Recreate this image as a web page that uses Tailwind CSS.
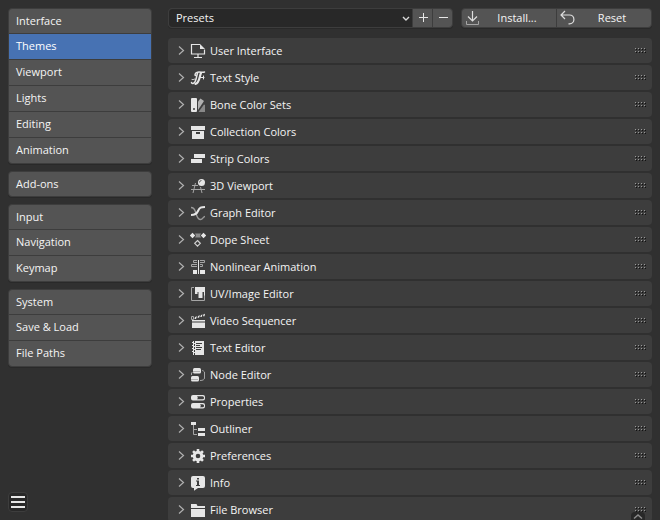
<!DOCTYPE html>
<html lang="en">
<head>
    <meta charset="UTF-8">
    <meta name="viewport" content="width=device-width, initial-scale=1.0">
    <title>Preferences</title>
    <script src="https://cdn.jsdelivr.net/npm/@tailwindcss/browser@4"></script>
</head>
<body class="h-screen overflow-hidden bg-[#303030] font-['Open_Sans','DejaVu_Sans',sans-serif] text-[11px] leading-4 text-[#f4f4f4] text-shadow-[0_1px_2px_rgb(0_0_0/0.6)]">

<div class="flex h-full gap-4 px-2 pt-2">

    <!-- Sidebar -->
    <aside class="flex w-36 shrink-0 flex-col">
        <nav id="sections" class="flex flex-col gap-[7px]"></nav>
        <button aria-label="Menu" class="mt-auto mb-2 flex size-5 items-center justify-center rounded border border-[#3d3d3d] bg-[#282828]">
            <svg class="size-4 shrink-0" viewBox="0 0 16 16" fill="#e6e6e6"><path d="M1 2h14v2H1zM1 7h14v2H1zM1 12h14v2H1z"/></svg>
        </button>
    </aside>

    <!-- Theme settings -->
    <main class="min-w-0 grow">
        <div class="flex h-5 gap-2">
            <div class="flex grow rounded border border-[#3d3d3d] bg-[#545454] shadow-[0_1px_0_#292929]">
                <div class="relative grow">
                    <select aria-label="Presets" class="h-full w-full appearance-none rounded-l-[3px] bg-[#282828] pl-[7px] outline-none">
                        <option>Presets</option>
                    </select>
                    <svg class="pointer-events-none absolute top-1/2 right-0 size-3 -translate-y-1/2" viewBox="0 0 12 12" fill="none" stroke="#d8d8d8" stroke-width="1.4"><path d="M3 5l3 3 3-3"/></svg>
                </div>
                <button aria-label="Add preset" class="flex w-5 items-center justify-center border-l border-[#3d3d3d]">
                    <svg class="size-4 shrink-0" viewBox="0 0 16 16" fill="#e6e6e6"><path d="M8 3h1v4h4v1H9v4H8V8H4V7h4z"/></svg>
                </button>
                <button aria-label="Remove preset" class="flex w-5 items-center justify-center border-l border-[#3d3d3d]">
                    <svg class="size-4 shrink-0" viewBox="0 0 16 16" fill="#e6e6e6"><path d="M4 7h9v1H4z"/></svg>
                </button>
            </div>
            <div class="flex w-[191px] rounded border border-[#3d3d3d] bg-[#545454] shadow-[0_1px_0_#292929]">
                <button class="flex flex-1 items-center pr-[2px] pl-[2px]">
                    <svg class="size-4 shrink-0" viewBox="0 0 16 16" fill="none" stroke="#dedede"><path d="M8.500 1v10M4 6.500l4.500 4.500L13 6.500" stroke-width="1.200"/><path d="M2.500 11v3.500h12V11" stroke="#a5a5a5"/></svg>
                    <span class="grow">Install...</span>
                </button>
                <button class="flex flex-1 items-center border-l border-[#3d3d3d] pr-[2px] pl-[2px]">
                    <svg class="size-4 shrink-0" viewBox="0 0 16 16" fill="none" stroke="#dedede" stroke-width="1.200"><path d="M6 1L2 5l4 4M2 5h8.500a4.200 4.200 0 0 1 0 8.800H9.500"/></svg>
                    <span class="grow">Reset</span>
                </button>
            </div>
        </div>
        <div id="panels" class="mt-[10px] flex flex-col gap-[2px]"></div>
    </main>
</div>

<div class="absolute right-[15px] bottom-0 flex h-2 w-[14px] justify-center rounded-t bg-[#282828]">
    <svg class="h-2 w-3" viewBox="0 0 12 8" fill="none" stroke="#8c8c8c" stroke-width="1.500"><path d="M2 6.500L6 3l4 3.500"/></svg>
</div>

<script>
    const sections = [
        ['Interface', 'Themes', 'Viewport', 'Lights', 'Editing', 'Animation'],
        ['Add-ons'],
        ['Input', 'Navigation', 'Keymap'],
        ['System', 'Save & Load', 'File Paths']
    ];
    const active = 'Themes';

    // [label, icon drawn on a 16x16 grid]
    const panels = [
        ['User Interface', '<path d="M10 1.500H1.500v9.500h13V6.500M8 11v3M4 14.500h8" fill="none" stroke="#e6e6e6" stroke-width="1.200"/><path d="M10 1l5 5h-5z"/>'],
        ['Text Style', '<g fill="none" stroke="#e6e6e6" stroke-linecap="round"><path d="M14.500 2C12 3 10 1.500 7.500 2.300 5 3 4.500 5 5.500 5.500" stroke-width="1.500"/><path d="M11 3C9.500 6 9.500 13 5.500 13.800" stroke-width="2.200"/><path d="M7.500 3.500C6 7 6.500 12.500 3 13.500c-1 .2-1.500-.5-1.500-1" stroke-width="1.500"/><path d="M2 9.500c1.500.5 2-.5 3-.5M9.500 7.500H14M13.500 6v3"/></g>'],
        ['Bone Color Sets', '<path fill-rule="evenodd" d="M2 1h4a1 1 0 0 1 1 1v12a1 1 0 0 1-1 1H2a1 1 0 0 1-1-1V2a1 1 0 0 1 1-1zM4 11a1 1 0 1 0 0 2 1 1 0 0 0 0-2z"/><path fill="#b0b0b0" d="M8 4.500L10.500 1.500 14 4 8 13z"/><path fill="#888" d="M8.500 15l5.500-7.500 1 .5v7z"/>'],
        ['Collection Colors', '<path d="M1 2h14v4H1z"/><path fill-rule="evenodd" d="M2 7h12v8H2zM6 8v2h4V8z"/>'],
        ['Strip Colors', '<path d="M4 3h11v4H4zM1 8h11v4H1z"/>'],
        ['3D Viewport', '<path d="M2 7.500h6M1 11.500h14M5.500 5L3 15M10.500 9l1.500 6" fill="none" stroke="#a5a5a5"/><circle cx="11.500" cy="4.500" r="3.500"/><path d="M9.500 4.500a2 2 0 0 1 2-2" fill="none" stroke="#666"/>'],
        ['Graph Editor', '<path d="M1 2.500c4.500 0 4 4 5.500 7.500 1 3 2 4.500 4 4.500 2.500 0 2.500-3 4.500-3" fill="none" stroke="#999" stroke-width="1.400"/><path d="M1 10c3.500 0 5.500-.5 7-4C9.500 2.500 11 2 15 2" fill="none" stroke="#e6e6e6" stroke-width="2"/>'],
        ['Dope Sheet', '<path fill="#8c8c8c" d="M5 1.500h6l-1 2 1 2H5l1-2z"/><path d="M2.500.8L5.200 3.500 2.500 6.200-.2 3.500zM13.500.8l2.700 2.700-2.700 2.700-2.700-2.700z"/><path d="M7.500 8.500l2.800 2.800-2.800 2.800-2.800-2.800z" fill="none" stroke="#cfcfcf" stroke-width="1.200"/>'],
        ['Nonlinear Animation', '<path d="M7 1.500H3.500v2H7M7 5.500H1.500v2H7M10 1.500h4.500v2H10M10 5.500h2.500v2H10" fill="none" stroke="#a5a5a5"/><path d="M8 1h1v14H8zM3 11h4v4H3zM10 11h5v4h-5z"/>'],
        ['UV/Image Editor', '<path d="M4 1.500H1.500v13h13V9" fill="none" stroke="#a5a5a5"/><path d="M5 1h10v8.500h-1V6h-1.500v6h-4V6H7.500v2H5z"/>'],
        ['Video Sequencer', '<path d="M2 7h13v1.500H2zM2 9.500h13V15H2zM5 4l2-.8L6 6H4.500zM8 3l2-.8L9 4.800H7.500zM11 2l1.500-.6-.8 2.600h-1.500zM13.500 1.200l1.500-.4-.5 2.400H13z"/><path d="M1.500 3.500h2v3h-2z" fill="none" stroke="#a5a5a5"/>'],
        ['Text Editor', '<path d="M3 1h11v14H3zM2 2h1v1H2zM2 5h1v1H2zM2 8h1v1H2zM2 11h1v1H2z"/><path d="M4.500 1v14" stroke="#3d3d3d" stroke-dasharray="2 1"/><path d="M6 3.500h6M6 5.500h4M6 7.500h6M6 9.500h5" stroke="#3d3d3d"/>'],
        ['Node Editor', '<rect x="3" y="1" width="8" height="5.500" rx="1.500"/><rect x="1" y="9" width="8" height="5.500" rx="1.500"/><path d="M3 4.500h7M1 12.500h7" stroke="#b0b0b0"/><path d="M12 3.500c1 0 1.500.5 2.500 1.500v6c0 1.500-1.500 2.500-4.500 2.500M2.500 5L1.500 6v2" fill="none" stroke="#a5a5a5"/>'],
        ['Properties', '<path fill-rule="evenodd" d="M3 1h10a2 2 0 0 1 2 2v1.500a2 2 0 0 1-2 2H3a2 2 0 0 1-2-2V3a2 2 0 0 1 2-2zM7 2.200c1 1 1 2 0 3.100h5.500a1.500 1.500 0 0 0 0-3.100zM3 9h10a2 2 0 0 1 2 2v1.500a2 2 0 0 1-2 2H3a2 2 0 0 1-2-2V11a2 2 0 0 1 2-2zM10 10.200c1 1 1 2 0 3.100h2.500a1.500 1.500 0 0 0 0-3.100z"/>'],
        ['Outliner', '<path d="M1 1h5v3H1zM8 7h7v3H8zM8 12h7v3H8z"/><path d="M3.500 4v9.500H7M3.500 8.500H7" fill="none" stroke="#a5a5a5"/>'],
        ['Preferences', '<circle cx="8" cy="8" r="3.800" fill="none" stroke="#e6e6e6" stroke-width="3"/><path d="M8 1v3M8 12v3M1 8h3M12 8h3M3.050 3.050l2 2M10.950 10.950l2 2M12.950 3.050l-2 2M5.050 10.950l-2 2" stroke="#e6e6e6" stroke-width="2.600"/>'],
        ['Info', '<path fill-rule="evenodd" d="M3 1h10a2 2 0 0 1 2 2v8a2 2 0 0 1-2 2H8l-4 2.800V13H3a2 2 0 0 1-2-2V3a2 2 0 0 1 2-2zM7 3v1.500h2V3zM6 5.500v1h1V10H6v1h4v-1H9V5.500z"/>'],
        ['File Browser', '<path d="M1 2h5.500l1 2H15v2H1zM1 7h14v8H1z"/>']
    ];

    // Sidebar groups
    document.getElementById('sections').innerHTML = sections.map(group => `
        <div class="flex flex-col divide-y divide-[#3d3d3d] overflow-hidden rounded border border-[#3d3d3d] bg-[#545454] shadow-[0_1px_0_#292929]">
            ${group.map(name => `<button class="h-[26px] pl-[7px] text-left first:h-[25px] last:h-[25px] only:h-6 not-first:pb-[2px] ${name === active ? 'bg-[#4772b3] text-white' : ''}">${name.replace('&', '&amp;')}</button>`).join('')}
        </div>`).join('');

    // Drag handle: light dots with a dark dot below each
    const grip = [0, 3, 6, 9].map(x => [0, 3].map(y =>
        `<path fill="#999" d="M${x} ${y}h1v1h-1z"/><path fill="#111" d="M${x + 1} ${y + 1}h1v1h-1z"/>`).join('')).join('');

    document.getElementById('panels').innerHTML = panels.map(([name, icon]) => `
        <button class="flex h-[25px] w-full shrink-0 items-center rounded bg-[#3d3d3d] pr-[6px] pl-2 text-left">
            <svg class="mr-[4px] h-4 w-[10px] shrink-0" viewBox="0 0 10 16" fill="none" stroke="#b0b0b0" stroke-width="1.200"><path d="M3 3.500L7.500 7.500 3 11.500"/></svg>
            <svg class="mr-1 size-4 shrink-0" viewBox="0 0 16 16" fill="#e6e6e6">${icon}</svg>
            <span class="grow">${name}</span>
            <svg class="h-[5px] w-[11px] shrink-0" viewBox="0 0 11 5">${grip}</svg>
        </button>`).join('');
</script>
</body>
</html>
